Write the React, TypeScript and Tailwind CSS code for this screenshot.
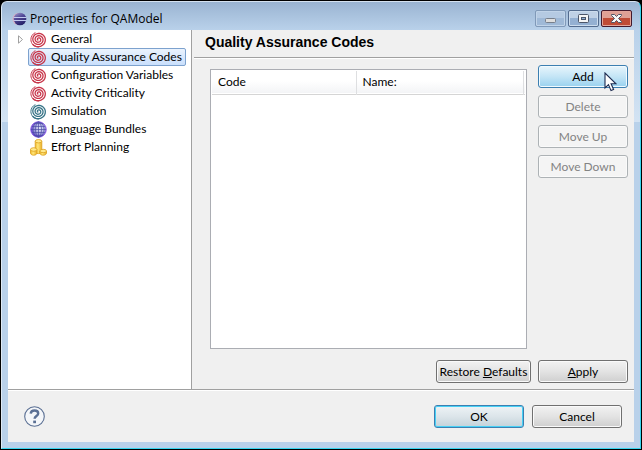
import type { ReactNode } from "react";

const spiralPoints = Array.from({ length: 81 }, (_, i) => {
  const t = i / 80;
  const angle = t * Math.PI * 6 + 2.4;
  const radius = 0.8 + t * 6.9;
  return `${(8.5 + radius * Math.cos(angle)).toFixed(2)},${(8.5 + radius * 0.97 * Math.sin(angle)).toFixed(2)}`;
}).join(" ");

function Spiral({ color }: { color: string }) {
  return (
    <svg width="17" height="17" viewBox="0 0 17 17" fill="none" stroke={color} strokeLinecap="round">
      <polyline points={spiralPoints} strokeWidth="1.3" />
      <path d="M8.500 16.100C4 16 .9 12.600.9 8.500.9 5.500 2.600 2.900 5 1.800" strokeWidth="1" />
    </svg>
  );
}

function Globe() {
  return (
    <svg width="17" height="17" viewBox="0 0 17 17">
      <defs>
        <radialGradient id="globe" cx=".6" cy=".42" r=".62">
          <stop offset="0" stopColor="#dfe6f6" />
          <stop offset=".55" stopColor="#a9a9de" />
          <stop offset="1" stopColor="#5c3cc4" />
        </radialGradient>
      </defs>
      <circle cx="8.500" cy="8.500" r="7.700" fill="url(#globe)" stroke="#7a48e0" />
      <g fill="none" stroke="#4a4aa6" strokeWidth=".7">
        <path d="M1 8.500h15M2 5.500h13M2 11.500h13M4 2.500h9M4 14.500h9M8.500 1v15" />
        <ellipse cx="8.500" cy="8.500" rx="3" ry="7.500" />
        <ellipse cx="8.500" cy="8.500" rx="5.600" ry="7.500" />
      </g>
    </svg>
  );
}

function Coins() {
  return (
    <svg width="17" height="17" viewBox="0 0 17 17" stroke="#dca01c" strokeWidth=".8">
      <defs>
        <linearGradient id="gold">
          <stop offset="0" stopColor="#f0b92b" />
          <stop offset=".4" stopColor="#ffe67a" />
          <stop offset="1" stopColor="#eab027" />
        </linearGradient>
      </defs>
      <path d="M5.200 2.200v10.800c0 1 1.300 1.600 3.300 1.600s3.300-.6 3.300-1.600V2.200" fill="url(#gold)" />
      <ellipse cx="8.500" cy="2.200" rx="3.300" ry="1.700" fill="#ffe98c" />
      <path d="M.5 10.500v3.500c0 1.200 1.200 2.200 3.200 2.200s3.300-1 3.300-2.200v-3.500" fill="url(#gold)" />
      <ellipse cx="3.700" cy="10.500" rx="3.200" ry="1.800" fill="#ffe98c" />
      <path d="M9.800 12v2c0 1.200 1.300 2.200 3.400 2.200s3.300-1 3.300-2.200v-2" fill="url(#gold)" />
      <ellipse cx="13.200" cy="12" rx="3.300" ry="1.700" fill="#ffe98c" />
    </svg>
  );
}

function EclipseLogo() {
  return (
    <svg width="15" height="14" viewBox="0 0 15 14">
      <defs>
        <linearGradient id="eclipse" x1="0" y1="0" x2=".5" y2="1">
          <stop offset="0" stopColor="#a9a3d2" />
          <stop offset=".45" stopColor="#544c9a" />
          <stop offset="1" stopColor="#27226a" />
        </linearGradient>
      </defs>
      <circle cx="6.500" cy="7" r="6" fill="#dcaec0" />
      <circle cx="8" cy="7" r="6.300" fill="url(#eclipse)" />
      <path d="M1.500 5.500h13M1.500 8.500h13" stroke="#c3cbf0" />
    </svg>
  );
}

function Cursor() {
  return (
    <svg className="pointer-events-none absolute top-[7px] right-[11px]" width="13" height="20" viewBox="0 0 13 20">
      <path d="M1 1v15l3.500-3.400 2.500 6 2.600-1.100-2.500-5.700H12z" fill="#fff" stroke="#1d2b50" strokeWidth="1.100" />
    </svg>
  );
}

const treeItems: { label: string; icon: ReactNode; expandable?: boolean; selected?: boolean }[] = [
  { label: "General", icon: <Spiral color="#c8374b" />, expandable: true },
  { label: "Quality Assurance Codes", icon: <Spiral color="#c8374b" />, selected: true },
  { label: "Configuration Variables", icon: <Spiral color="#c8374b" /> },
  { label: "Activity Criticality", icon: <Spiral color="#c8374b" /> },
  { label: "Simulation", icon: <Spiral color="#377487" /> },
  { label: "Language Bundles", icon: <Globe /> },
  { label: "Effort Planning", icon: <Coins /> },
];

const buttonBase = "h-[23px] shrink-0 rounded-[3px] border text-center leading-5 whitespace-nowrap";
const buttonNormal =
  "border-[#707070] bg-linear-to-b from-[#f2f2f2] via-[#e3e3e3] to-[#cfcfcf] shadow-[inset_0_0_0_1px_#fafafa]";
const buttonDisabled = "border-[#adb2b5] bg-[#f4f4f4] text-[#838383] shadow-[inset_0_0_0_1px_#fafafa]";
const captionButton = "flex h-[17px] w-[31px] items-center justify-center rounded-[2px] border";

function TitleBar() {
  return (
    <header className="flex h-7 items-start justify-between pr-[2px] pl-1">
      <h1 className="flex items-center gap-[3px] pt-[9px] font-['Open_Sans','Segoe_UI',sans-serif] font-normal">
        <EclipseLogo />
        <span className="leading-4">Properties for QAModel</span>
      </h1>
      <div className="flex gap-[2px] pt-2">
        <button aria-label="Minimize" className={`${captionButton} border-[#8099b8] bg-linear-to-b from-[#b5cae2] from-50% to-[#9fb9d7] to-50% shadow-[inset_0_0_0_1px_#c1d4e9]`}>
          <svg width="13" height="13" viewBox="0 0 13 13">
            <rect x="1.500" y="6.500" width="10" height="4" rx="1" fill="#dedede" stroke="#777f8b" />
          </svg>
        </button>
        <button aria-label="Maximize" className={`${captionButton} border-[#536b8e] bg-linear-to-b from-[#bfd1e6] from-50% to-[#94b0d2] to-50% shadow-[inset_0_0_0_1px_#ccdced]`}>
          <svg width="13" height="13" viewBox="0 0 13 13">
            <rect x="1.500" y="2.500" width="10" height="8" rx="1" fill="#f5f5f5" stroke="#4c5669" />
            <rect x="4.500" y="5.500" width="4" height="2" fill="#8faed2" stroke="#4c5669" />
          </svg>
        </button>
        <button aria-label="Close" className={`${captionButton} border-[#43192c] bg-linear-to-b from-[#dfa095] from-50% to-[#bf4b36] to-50% shadow-[inset_0_0_0_1px_#e3a59b]`}>
          <svg width="13" height="13" viewBox="0 0 13 13">
            <path d="M1.500 2.500h3l2 2 2-2h3v1l-3 3 3 3v1h-3l-2-2-2 2h-3v-1l3-3-3-3z" fill="#f7f7f7" stroke="#535666" strokeLinejoin="round" />
          </svg>
        </button>
      </div>
    </header>
  );
}

function Tree() {
  return (
    <nav aria-label="Property pages" className="w-[184px] shrink-0 border-r border-[#a0a0a0] bg-white">
      <ul>
        {treeItems.map((item) => (
          <li key={item.label} className="flex h-[18px] items-center">
            <span className="flex w-5 shrink-0 justify-end pr-1">
              {item.expandable && (
                <svg width="7" height="9" viewBox="0 0 7 9">
                  <path d="M1.500 .8v7.400l4-3.700z" fill="#fff" stroke="#a0a0a0" />
                </svg>
              )}
            </span>
            <a
              href="#"
              aria-current={item.selected ? "page" : undefined}
              className={`flex h-[18px] items-center gap-1 rounded-[2px] border pr-[3px] pl-px leading-4 whitespace-nowrap ${
                item.selected ? "border-[#7da2ce] bg-linear-to-b from-[#ebf3fd] to-[#c9dffc]" : "border-transparent"
              }`}
            >
              {item.icon}
              {item.label}
            </a>
          </li>
        ))}
      </ul>
    </nav>
  );
}

function CodesPage() {
  return (
    <main className="ml-[2px] flex grow flex-col">
      <h2 className="h-7 border-b border-[#a0a0a0] pl-[11px] font-['Liberation_Sans',Arial,sans-serif] text-[14px] leading-6 font-bold shadow-[0_1px_0_#fff]">
        Quality Assurance Codes
      </h2>
      <div className="flex grow gap-[11px] pt-[7px] pr-[6px] pl-4">
        <div className="mt-1 grow border border-[#abadb3] bg-white p-px">
          <table className="w-full table-fixed border-collapse">
            <thead>
              <tr className="h-[23px] border-b border-[#d5d5d5] bg-linear-to-b from-white from-45% to-[#f3f4f6] text-left leading-5">
                <th className="w-[144px] border-r border-[#dedfe1] px-[6px] font-normal">Code</th>
                <th className="border-r border-[#dedfe1] px-[6px] font-normal">Name:</th>
                <td className="w-[2px]" />
              </tr>
            </thead>
            <tbody />
          </table>
        </div>
        <div className="flex w-[90px] shrink-0 flex-col gap-[7px]">
          <div className="relative flex">
            <button className={`${buttonBase} w-full border-[#3c7fb1] bg-linear-to-b from-[#e8f5fc] via-[#c4e5f6] to-[#98d1ef] shadow-[inset_0_0_0_1px_#f0faff]`}>
              Add
            </button>
            <Cursor />
          </div>
          <button disabled className={`${buttonBase} ${buttonDisabled}`}>Delete</button>
          <button disabled className={`${buttonBase} ${buttonDisabled}`}>Move Up</button>
          <button disabled className={`${buttonBase} ${buttonDisabled}`}>Move Down</button>
        </div>
      </div>
      <div className="flex justify-end gap-[7px] pt-[11px] pr-[6px] pb-[6px]">
        <button className={`${buttonBase} ${buttonNormal} w-[95px]`}>
          Restore <u>D</u>efaults
        </button>
        <button className={`${buttonBase} ${buttonNormal} w-[90px]`}>
          <u>A</u>pply
        </button>
      </div>
    </main>
  );
}

export default function App() {
  return (
    <div className="flex min-h-screen flex-col bg-black font-[Lato,'Segoe_UI',sans-serif] text-[12px] text-black">
      <div className="m-px flex grow flex-col rounded-t-[6px] border-t border-r border-b border-l border-t-[#d5e2f0] border-r-[#38d5ef] border-b-[#38d5ef] border-l-[#dfeaf5] bg-[linear-gradient(to_bottom,#9ab4d2,#b9d1ea_28px,#d3e3f3_120px,#b9d1ea_120px)] px-[6px] pb-[6px]">
        <TitleBar />
        <div className="flex grow flex-col bg-[#f0f0f0]">
          <div className="flex grow border-b border-[#a0a0a0]">
            <Tree />
            <CodesPage />
          </div>
          <footer className="flex items-center justify-between border-t border-white pt-[14px] pr-3 pb-[14px] pl-4">
            <button aria-label="Help">
              <svg width="21" height="21" viewBox="0 0 21 21" fill="none" stroke="#5b7094">
                <circle cx="10.500" cy="10.500" r="9.800" fill="#f4f6f9" strokeWidth="1.100" />
                <path d="M6.700 7.700C6.900 5.500 8.300 4.500 10.500 4.500c2.300 0 3.700 1.100 3.700 3 0 2.500-3.600 2.600-3.600 5.300" strokeWidth="2.400" />
                <path d="M9.200 14.600h2.800v2.600H9.200z" fill="#5b7094" stroke="none" />
              </svg>
            </button>
            <div className="flex gap-2">
              <button className={`${buttonBase} w-[90px] border-[#3c7fb1] bg-linear-to-b from-[#eef3f6] via-[#dce5ea] to-[#c3d2da] shadow-[inset_0_0_0_1px_#46d0f5]`}>
                OK
              </button>
              <button className={`${buttonBase} ${buttonNormal} w-[90px]`}>Cancel</button>
            </div>
          </footer>
        </div>
      </div>
    </div>
  );
}
